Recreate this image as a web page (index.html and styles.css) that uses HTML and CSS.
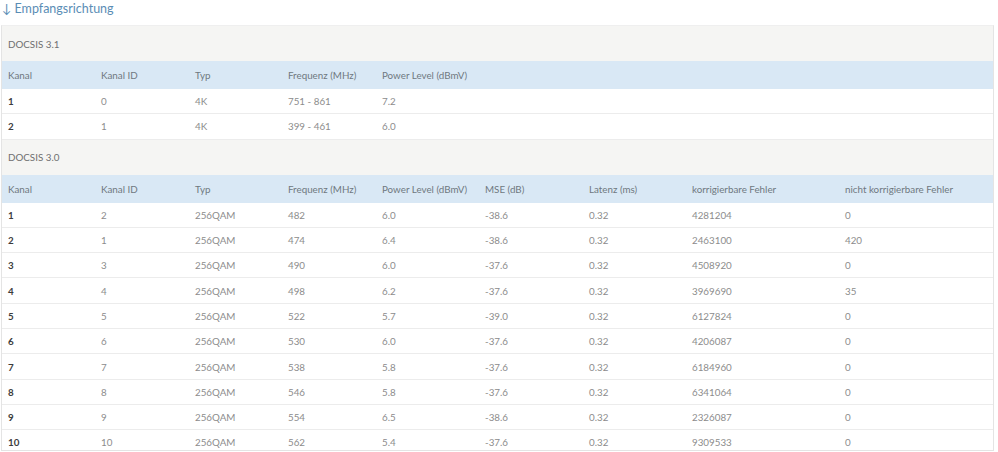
FILE: index.html
```html
<!DOCTYPE html>
<html lang="de">
<head>
<meta charset="utf-8">
<link rel="stylesheet" href="styles.css">
</head>
<body>
<h2 class="title">↓ Empfangsrichtung</h2>
<div class="panel">
<table class="tbl">
<colgroup>
<col class="c93"><col class="c94"><col class="c93"><col class="c94"><col class="c103"><col class="c104"><col class="c103"><col class="c153"><col>
</colgroup>
<tbody>
<tr class="section"><td colspan="9">DOCSIS 3.1</td></tr>
<tr class="head"><td>Kanal</td><td>Kanal ID</td><td>Typ</td><td>Frequenz (MHz)</td><td>Power Level (dBmV)</td><td></td><td></td><td></td><td></td></tr>
<tr><td>1</td><td>0</td><td>4K</td><td>751 - 861</td><td>7.2</td><td></td><td></td><td></td><td></td></tr>
<tr><td>2</td><td>1</td><td>4K</td><td>399 - 461</td><td>6.0</td><td></td><td></td><td></td><td></td></tr>
<tr class="section"><td colspan="9">DOCSIS 3.0</td></tr>
<tr class="head"><td>Kanal</td><td>Kanal ID</td><td>Typ</td><td>Frequenz (MHz)</td><td>Power Level (dBmV)</td><td>MSE (dB)</td><td>Latenz (ms)</td><td>korrigierbare Fehler</td><td>nicht korrigierbare Fehler</td></tr>
<tr><td>1</td><td>2</td><td>256QAM</td><td>482</td><td>6.0</td><td>-38.6</td><td>0.32</td><td>4281204</td><td>0</td></tr>
<tr><td>2</td><td>1</td><td>256QAM</td><td>474</td><td>6.4</td><td>-38.6</td><td>0.32</td><td>2463100</td><td>420</td></tr>
<tr><td>3</td><td>3</td><td>256QAM</td><td>490</td><td>6.0</td><td>-37.6</td><td>0.32</td><td>4508920</td><td>0</td></tr>
<tr><td>4</td><td>4</td><td>256QAM</td><td>498</td><td>6.2</td><td>-37.6</td><td>0.32</td><td>3969690</td><td>35</td></tr>
<tr><td>5</td><td>5</td><td>256QAM</td><td>522</td><td>5.7</td><td>-39.0</td><td>0.32</td><td>6127824</td><td>0</td></tr>
<tr><td>6</td><td>6</td><td>256QAM</td><td>530</td><td>6.0</td><td>-37.6</td><td>0.32</td><td>4206087</td><td>0</td></tr>
<tr><td>7</td><td>7</td><td>256QAM</td><td>538</td><td>5.8</td><td>-37.6</td><td>0.32</td><td>6184960</td><td>0</td></tr>
<tr><td>8</td><td>8</td><td>256QAM</td><td>546</td><td>5.8</td><td>-37.6</td><td>0.32</td><td>6341064</td><td>0</td></tr>
<tr><td>9</td><td>9</td><td>256QAM</td><td>554</td><td>6.5</td><td>-38.6</td><td>0.32</td><td>2326087</td><td>0</td></tr>
<tr><td>10</td><td>10</td><td>256QAM</td><td>562</td><td>5.4</td><td>-37.6</td><td>0.32</td><td>9309533</td><td>0</td></tr>
</tbody>
</table>
</div>
</body>
</html>
```

FILE: styles.css
```css
html, body {
  margin: 0;
  padding: 0;
  background: #ffffff;
}
body {
  font-family: Lato, "Open Sans", "Liberation Sans", sans-serif;
}
.title {
  margin: 0;
  padding: 0 0 0 2px;
  height: 25px;
  line-height: 17px;
  font-size: 12.5px;
  font-weight: normal;
  color: #5a8db5;
}
.panel {
  margin-left: 1px;
  width: 991px;
  height: 424px;
  border: 1px solid #e4e4e4;
  border-top-color: #efefef;
  overflow: hidden;
}
.tbl {
  width: 100%;
  table-layout: fixed;
  border-collapse: collapse;
  font-size: 9.8px;
  color: #8c8c8c;
}
.c93 { width: 93px; }
.c94 { width: 94px; }
.c103 { width: 103px; }
.c104 { width: 104px; }
.c153 { width: 153px; }
.tbl td {
  padding: 0 0 0 6px;
  height: 24.3px;
  border-bottom: 1px solid #ececec;
  white-space: nowrap;
  overflow: hidden;
}
.tbl td:first-child {
  font-weight: bold;
  color: #3c3c3c;
}
.tbl tr.section td {
  height: 35px;
  background: #f5f5f3;
  color: #6f6f6f;
  font-weight: normal;
  border-bottom: none;
}
.tbl tr.head td {
  height: 28px;
  background: #d9e8f5;
  color: #6f7880;
  font-weight: normal;
  border-bottom: none;
}
```
